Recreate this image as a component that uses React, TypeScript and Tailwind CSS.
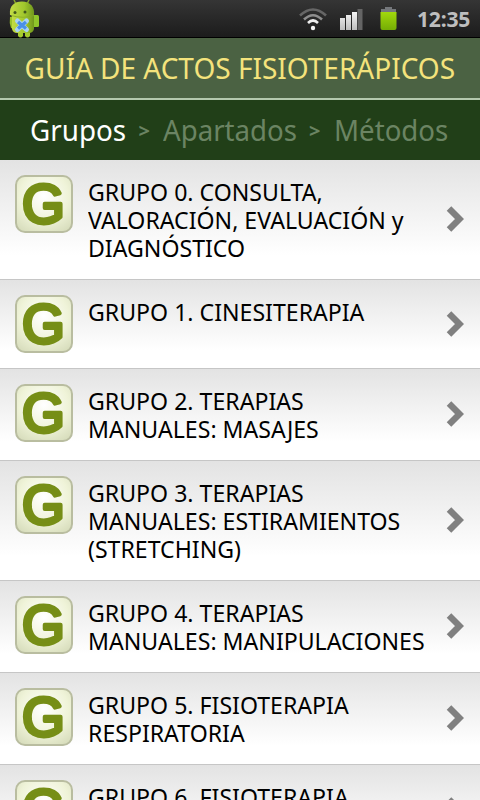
const groups = [
  { lines: ["GRUPO 0. CONSULTA,", "VALORACIÓN, EVALUACIÓN y", "DIAGNÓSTICO"] },
  { lines: ["GRUPO 1. CINESITERAPIA"] },
  { lines: ["GRUPO 2. TERAPIAS", "MANUALES: MASAJES"] },
  { lines: ["GRUPO 3. TERAPIAS", "MANUALES: ESTIRAMIENTOS", "(STRETCHING)"] },
  { lines: ["GRUPO 4. TERAPIAS", "MANUALES: MANIPULACIONES"] },
  { lines: ["GRUPO 5. FISIOTERAPIA", "RESPIRATORIA"] },
  { lines: ["GRUPO 6. FISIOTERAPIA"] },
];

function Robot() {
  return (
    <svg className="ml-[9px] h-[38px] w-[31px]" viewBox="0 0 31 38">
      <defs>
        <linearGradient id="robot" x1="0" x2="1">
          <stop offset="0" stopColor="#c3dc45" />
          <stop offset="0.6" stopColor="#a0c62c" />
          <stop offset="1" stopColor="#6f961c" />
        </linearGradient>
      </defs>
      <path d="M5 0l2 4M20 0l-2 4" stroke="#8aa52d" strokeWidth="1.5" />
      <rect x="22" y="15" width="8" height="12" rx="1.5" fill="#8fc52a" />
      <path d="M9 29h5v7q-2.500 3-5 0zM16 29h5v7q-2.500 3-5 0z" fill="#a5cb2e" />
      <path d="M1 17q-1 6 1 11l3 1V16z" fill="#9bc32b" />
      <path d="M3 14h22v15q-1 4-5 4H8q-4 0-5-4z" fill="url(#robot)" />
      <path d="M1 15C0 6 5 1.500 13 1.500S26 7 25 15q-12 4-24 0z" fill="url(#robot)" />
      <path d="M2 15.500q12 3.500 23 0" fill="none" stroke="#86aa25" strokeWidth="0.8" />
      <circle cx="6" cy="12.500" r="1.500" fill="#41581c" />
      <circle cx="16" cy="12" r="1.500" fill="#41581c" />
      <path d="M8.500 21l9 8.500M17.500 21l-9 8.500" stroke="#a9d2f4" strokeWidth="5" strokeLinecap="round" />
      <path d="M9 22l8 6.500M17 22l-8 6.500" stroke="#4a90e8" strokeWidth="3.400" />
    </svg>
  );
}

function StatusBar() {
  return (
    <div className="flex h-[38px] items-start border-b border-black bg-linear-to-b from-[#353535] to-[#1c1c1c]">
      <Robot />
      <svg className="mt-[7px] ml-[258px] h-[24px] w-[30px]" viewBox="0 0 30 24" fill="none">
        <path d="M2 8.500Q15-3.500 28 8.500" stroke="#666" strokeWidth="2.600" />
        <path d="M6 12.500Q15 4 24 12.500" stroke="#8e8e8e" strokeWidth="2.600" />
        <path d="M10 16Q15 11 20 16" stroke="#eee" strokeWidth="2.600" />
        <circle cx="15" cy="21" r="2.200" fill="#f4f4f4" />
      </svg>
      <svg className="mt-[8px] ml-[10px] h-[23px] w-[26px]" viewBox="0 0 26 23">
        <defs>
          <linearGradient id="bars" x1="0" x2="0" y1="0" y2="1">
            <stop offset="0" stopColor="#f5f5f5" />
            <stop offset="1" stopColor="#bdbdbd" />
          </linearGradient>
        </defs>
        <path d="M2 10h5v12H2zM8 7h5v15H8zM14 4h5v18h-5z" fill="url(#bars)" />
        <path d="M19.500 1h5v21h-5z" fill="#646464" />
      </svg>
      <svg className="mt-[6px] ml-[15px] h-[26px] w-[20px]" viewBox="0 0 20 26">
        <defs>
          <linearGradient id="battery" x1="0" x2="0" y1="0" y2="1">
            <stop offset="0" stopColor="#a2d80c" />
            <stop offset="1" stopColor="#75ad05" />
          </linearGradient>
        </defs>
        <path d="M6 1h7v2h4v4H2V3h4z" fill="#74777b" />
        <path d="M1.500 6h16v16q0 2-2 2h-12q-2 0-2-2z" fill="url(#battery)" />
      </svg>
      <span className="mt-[5px] ml-[18px] origin-left scale-x-[1.03] text-[20.500px] leading-[29px] font-bold tracking-[-0.200px] text-[#bebebe]">
        12:35
      </span>
    </div>
  );
}

function GroupIcon() {
  return (
    <div className="h-[58px] w-[58px] shrink-0 rounded-[10px] border-2 border-[#b9bda0] bg-[radial-gradient(circle_at_50%_35%,#ffffff_0%,#eff3d8_55%,#d3d9b7_100%)]">
      <svg className="h-[54px] w-[54px] overflow-visible" viewBox="0 0 54 54">
        <text
          x="26.500"
          y="46.300"
          textAnchor="middle"
          className="font-['Liberation_Sans',sans-serif] text-[55px]"
          fill="#768e16"
          stroke="#768e16"
          strokeWidth="3.800"
          strokeLinejoin="round"
        >
          G
        </text>
      </svg>
    </div>
  );
}

function GroupRow({ lines }: { lines: string[] }) {
  return (
    <li className="flex shrink-0 items-center border-b border-[#c6c6c6] bg-linear-to-b from-[#e3e3e3] to-white to-80% pr-4 pl-[15px] last:min-h-[92px]">
      <div className="self-start py-[15px]">
        <GroupIcon />
      </div>
      <div className="ml-[15px] w-0 grow origin-left scale-x-[0.963] self-start pt-[18px] pb-[17px] text-[24px] leading-[28px] whitespace-nowrap text-black">
        {lines.map((line) => (
          <p key={line}>{line}</p>
        ))}
      </div>
      <svg className="mb-px h-[26px] w-[18px] shrink-0" viewBox="0 0 18 26">
        <path d="M3 2.500L13.500 13 3 23.500" fill="none" stroke="#808080" strokeWidth="6.400" />
      </svg>
    </li>
  );
}

export default function App() {
  return (
    <div className="flex h-[800px] w-[480px] flex-col overflow-hidden bg-white font-['Noto_Sans',sans-serif]">
      <StatusBar />
      <h1 className="flex h-[62px] shrink-0 items-center justify-center border-b-2 border-[#b4c8ae] bg-[#4b6243] text-[29.500px] whitespace-nowrap text-[#f4e37c]">
        <span className="scale-x-[0.949]">GUÍA DE ACTOS FISIOTERÁPICOS</span>
      </h1>
      <nav className="flex h-[60px] shrink-0 items-center bg-[#213f18] pt-px pl-[29.500px] text-[28.500px] whitespace-nowrap text-[#6b8463]">
        <span className="w-[109px] origin-left scale-x-[0.975] text-white">Grupos</span>
        <span className="w-[24.500px] text-[20px] font-bold">&gt;</span>
        <span className="w-[146px] origin-left scale-x-[0.97]">Apartados</span>
        <span className="w-[25px] text-[20px] font-bold">&gt;</span>
        <span className="origin-left scale-x-[0.97]">Métodos</span>
      </nav>
      <ul className="flex min-h-0 grow flex-col overflow-hidden">
        {groups.map((group) => (
          <GroupRow key={group.lines[0]} lines={group.lines} />
        ))}
      </ul>
    </div>
  );
}
